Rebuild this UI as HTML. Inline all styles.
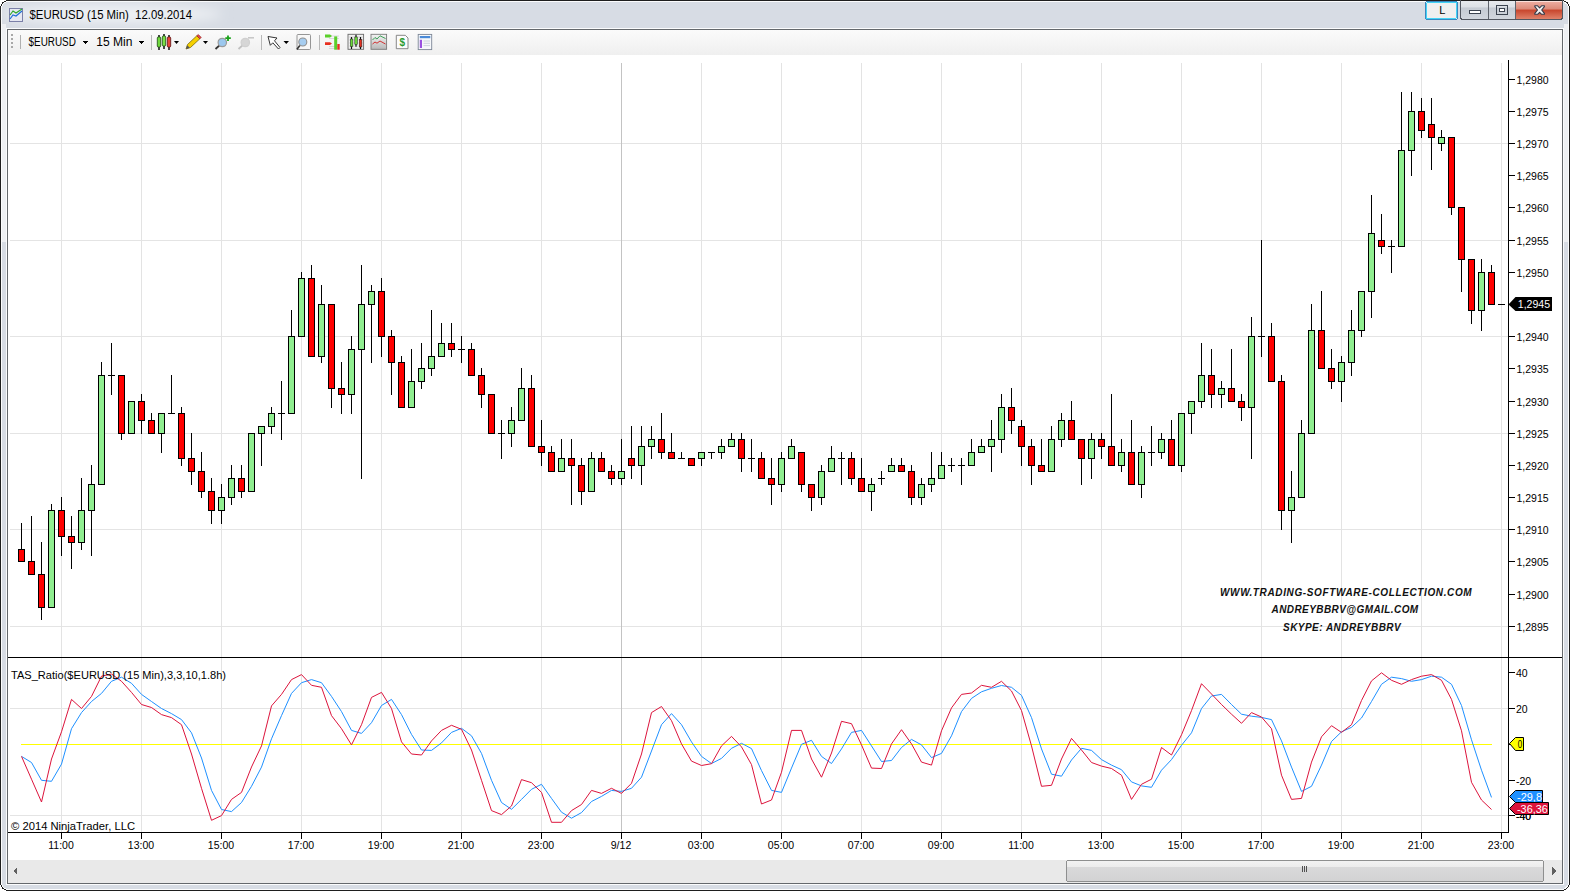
<!DOCTYPE html>
<html><head><meta charset="utf-8"><style>
html,body{margin:0;padding:0;width:1570px;height:891px;overflow:hidden;background:#fff;}
svg{position:absolute;left:0;top:0;}
text{font-family:"Liberation Sans",sans-serif;}
.ax{font-size:10.5px;fill:#000;}
.wm{font-size:10px;font-weight:bold;font-style:italic;fill:#111;letter-spacing:0.3px;}
</style></head><body>
<svg width="1570" height="891" viewBox="0 0 1570 891" shape-rendering="crispEdges">
<defs>
<linearGradient id="tb" x1="0" y1="0" x2="0" y2="1"><stop offset="0" stop-color="#fbfbfb"/><stop offset="1" stop-color="#efefef"/></linearGradient>
<linearGradient id="title" x1="0" y1="0" x2="0" y2="1"><stop offset="0" stop-color="#dde3ea"/><stop offset="1" stop-color="#e3e8ee"/></linearGradient>
<linearGradient id="closeg" x1="0" y1="0" x2="0" y2="1"><stop offset="0" stop-color="#eeb0a4"/><stop offset=".45" stop-color="#dc8a78"/><stop offset=".5" stop-color="#c8452c"/><stop offset="1" stop-color="#e0826a"/></linearGradient>
<linearGradient id="btng" x1="0" y1="0" x2="0" y2="1"><stop offset="0" stop-color="#eef0f3"/><stop offset=".45" stop-color="#dde1e6"/><stop offset=".5" stop-color="#c5cbd3"/><stop offset="1" stop-color="#d2d7de"/></linearGradient>
<linearGradient id="thumb" x1="0" y1="0" x2="0" y2="1"><stop offset="0" stop-color="#f3f3f3"/><stop offset=".3" stop-color="#ececec"/><stop offset=".31" stop-color="#d9d9da"/><stop offset="1" stop-color="#d2d2d3"/></linearGradient>
</defs>
<!-- window frame -->
<rect x="0.5" y="0.5" width="1569" height="890" rx="8" ry="8" fill="#d7dce4" stroke="#1e1e1e"/>
<rect x="1.5" y="1.5" width="1567" height="888" rx="7" ry="7" fill="none" stroke="#fbfcfd" stroke-width="1"/>
<rect x="2" y="24" width="4" height="218" fill="#eef0f3"/>
<rect x="1564" y="24" width="4" height="218" fill="#eef0f3"/>
<rect x="6.5" y="28.5" width="1557" height="856" fill="none" stroke="#fbfcfd"/>
<filter id="blur8" x="-20%" y="-100%" width="140%" height="300%"><feGaussianBlur stdDeviation="6"/></filter>
<ellipse cx="112" cy="14" rx="110" ry="9" fill="#eef1f4" filter="url(#blur8)"/>
<!-- title icon -->
<rect x="9.5" y="8.5" width="13" height="13" fill="#e6e8f2" stroke="#7b80a8"/>
<path d="M10,19 L13,15 L16,16 L22,11" fill="none" stroke="#1f6fd8" stroke-width="1.2" shape-rendering="geometricPrecision"/>
<path d="M10,15 L13,11 L16,13 L22,9" fill="none" stroke="#2da82d" stroke-width="1.2" shape-rendering="geometricPrecision"/>
<text x="29.5" y="19" style="font-size:12.5px" fill="#000" textLength="162.5" lengthAdjust="spacingAndGlyphs">$EURUSD (15 Min)&#160; 12.09.2014</text>
<!-- title buttons -->
<rect x="1425.5" y="1.5" width="32" height="18" rx="2" fill="#f0f0f0" stroke="#3a88c0" stroke-width="1"/>
<rect x="1426.5" y="2.5" width="30" height="16" rx="1.5" fill="none" stroke="#44d4f6" stroke-width="1"/>
<text x="1439.3" y="14" style="font-size:11px" fill="#000">L</text>
<rect x="1460.5" y="-3.5" width="102" height="23" rx="3" fill="url(#btng)" stroke="#525760"/>
<line x1="1461" y1="0.5" x2="1562" y2="0.5" stroke="#1e1e1e"/>
<rect x="1515" y="1" width="47" height="18" rx="2" fill="url(#closeg)"/>
<line x1="1488.5" y1="1" x2="1488.5" y2="19" stroke="#5e636b"/>
<line x1="1515.5" y1="1" x2="1515.5" y2="19" stroke="#5e636b"/>
<rect x="1469.5" y="10.5" width="11" height="3" fill="#fff" stroke="#3c4450"/>
<rect x="1496.5" y="5.5" width="11" height="9" fill="none" stroke="#3c4450" stroke-width="1.2"/>
<rect x="1499.5" y="8.5" width="5" height="3" fill="#fff" stroke="#3c4450"/>
<path d="M1534.8,5.8 L1537.6,5.8 L1539.6,7.8 L1541.6,5.8 L1544.4,5.8 L1544.4,6.6 L1541.7,10 L1544.4,13.4 L1544.4,14.3 L1541.6,14.3 L1539.6,12.3 L1537.6,14.3 L1534.8,14.3 L1534.8,13.4 L1537.5,10 L1534.8,6.6 Z" fill="#f2f2f2" stroke="#343a48" stroke-width="1.1" stroke-linejoin="round" shape-rendering="geometricPrecision"/>
<line x1="1516" y1="1.5" x2="1562" y2="1.5" stroke="#fbe0da"/>
<!-- client area -->
<rect x="7.5" y="29.5" width="1555" height="854" fill="#fff" stroke="#64686c"/>
<rect x="8" y="30" width="1554" height="25" fill="url(#tb)"/>
<!-- scrollbar -->
<rect x="8" y="860" width="1554" height="23" fill="#e9e9e9"/>
<rect x="1066.5" y="860.5" width="477" height="21" rx="2" fill="url(#thumb)" stroke="#8e8f8f"/>
<path d="M1302.5,866 v6 M1304.5,866 v6 M1306.5,866 v6" stroke="#505050"/>
<path d="M17,867 L13,871 L17,875 Z" fill="#606060"/>
<path d="M1552,867 L1556,871 L1552,875 Z" fill="#606060"/>
<!-- toolbar -->
<g id="toolbar">
<path d="M11,34 h2 v2 h-2 Z M11,38 h2 v2 h-2 Z M11,42 h2 v2 h-2 Z M11,46 h2 v2 h-2 Z" fill="#a8a8a8"/>
<line x1="20.5" y1="35" x2="20.5" y2="49" stroke="#b0b0b0"/>
<text x="28.5" y="45.5" style="font-size:12px" fill="#000" textLength="47.4" lengthAdjust="spacingAndGlyphs">$EURUSD</text>
<path d="M83,41 L88,41 L85.5,44 Z" fill="#000"/>
<text x="96.3" y="45.5" style="font-size:12px" fill="#000" textLength="36.2" lengthAdjust="spacingAndGlyphs">15 Min</text>
<path d="M139,41 L144,41 L141.5,44 Z" fill="#000"/>
<line x1="151.5" y1="35" x2="151.5" y2="50" stroke="#b8b8b8"/>
<g shape-rendering="geometricPrecision">
<!-- candles icon -->
<path d="M159,35 v15 M164,34 v15 M169,35 v15" stroke="#000" stroke-width="1.4"/>
<rect x="157.3" y="37" width="3.4" height="10" rx="1" fill="#6fd83c" stroke="#1c4a10" stroke-width=".8"/>
<rect x="162.3" y="36" width="3.4" height="10" rx="1" fill="#7be046" stroke="#1c4a10" stroke-width=".8"/>
<rect x="167.3" y="37" width="3.4" height="10" rx="1" fill="#e8453a" stroke="#5a1010" stroke-width=".8"/>
<path d="M174,41 L179,41 L176.5,44 Z" fill="#000"/>
<!-- pencil -->
<path d="M186,49 L187.5,44.5 L196.8,35.8 L199.8,38.8 L190.5,47.5 Z" fill="#f5d000" stroke="#7a6a10" stroke-width=".8"/>
<path d="M196.8,35.8 L198.3,34.5 L201.3,37.5 L199.8,38.8 Z" fill="#e84848" stroke="#8a2020" stroke-width=".6"/>
<path d="M186,49 L187.3,45.3 L189.7,47.7 Z" fill="#555"/>
<path d="M203,41 L208,41 L205.5,44 Z" fill="#000"/>
<!-- zoom in -->
<line x1="215.5" y1="49" x2="219.5" y2="45.3" stroke="#333" stroke-width="1.8"/>
<circle cx="222.3" cy="42.5" r="4.2" fill="#9cc8ee" stroke="#9a9a9a" stroke-width="1.2"/>
<path d="M228,35.5 v5.5 M225.3,38.2 h5.5" stroke="#1aa21a" stroke-width="1.8"/>
<!-- zoom out gray -->
<line x1="238.5" y1="49" x2="242.5" y2="45.3" stroke="#c0c0c0" stroke-width="1.8"/>
<circle cx="245.3" cy="42.5" r="4.2" fill="#d6d6d6" stroke="#d0d0d0" stroke-width="1.2"/>
<path d="M248,37.8 h6" stroke="#c8c8c8" stroke-width="1.6"/>
</g>
<line x1="261.5" y1="35" x2="261.5" y2="50" stroke="#b8b8b8"/>
<g shape-rendering="geometricPrecision">
<!-- cursor -->
<path d="M268,36.5 L277,38 L274.5,40.8 L280,47.5 L278.5,49 L272.8,42.8 L270.3,45.3 Z" fill="#fff" stroke="#333" stroke-width="1"/>
<path d="M283.5,41 L289,41 L286.25,44 Z" fill="#000"/>
<!-- magnifier box -->
<rect x="297" y="34.5" width="13.5" height="15" rx="1" fill="#f8f8f8" stroke="#8a8a8a" stroke-width=".9"/>
<circle cx="302.8" cy="42" r="4" fill="#a6cdf0" stroke="#909090" stroke-width="1.1"/>
<line x1="296.8" y1="49.5" x2="299.8" y2="45.5" stroke="#333" stroke-width="1.6"/>
</g>
<line x1="319.5" y1="35" x2="319.5" y2="50" stroke="#b8b8b8"/>
<g shape-rendering="geometricPrecision">
<!-- strategy icon -->
<path d="M329,36 h10 M329,38.5 h10 M329,46.5 h10 M329,48.5 h10" stroke="#d0d0d0" stroke-width=".8"/>
<path d="M325,34.6 h5 l2,1.5 l-2,1.5 h-5 Z" fill="#5ad02a"/>
<path d="M325,42.2 h5 l2,1.4 l-2,1.4 h-5 Z" fill="#e83020"/>
<rect x="334.2" y="36.4" width="3" height="13.3" fill="#5ad02a"/>
<rect x="337.3" y="44" width="2.4" height="5.7" fill="#e83020"/>
<!-- candle box -->
<rect x="348" y="34.3" width="15.6" height="15" fill="#f0f0f0" stroke="#6a6a6a" stroke-width=".9"/>
<path d="M349,37 h14 M349,40 h14 M349,43 h14 M349,46 h14" stroke="#c8c8c8" stroke-width=".6"/>
<path d="M351.5,37 v12 M356,34.8 v12 M360.5,37 v12" stroke="#111" stroke-width="1.2"/>
<rect x="350.3" y="39" width="2.6" height="7.5" fill="#6ad83a" stroke="#222" stroke-width=".5"/>
<rect x="354.8" y="37" width="2.6" height="7.5" fill="#6ad83a" stroke="#222" stroke-width=".5"/>
<rect x="359.3" y="39.5" width="2.6" height="7.5" fill="#e03020" stroke="#222" stroke-width=".5"/>
<!-- line chart box -->
<defs><linearGradient id="lcb" x1="0" y1="0" x2="0" y2="1"><stop offset="0" stop-color="#f4f4f4"/><stop offset="1" stop-color="#b8b8b8"/></linearGradient></defs>
<rect x="371" y="34.3" width="15.6" height="15" fill="url(#lcb)" stroke="#7a7a7a" stroke-width=".9"/>
<path d="M372.5,40 L375,37.5 L377,39 L380,35.8 L385.5,38.5" fill="none" stroke="#2a9a4a" stroke-width=".9"/>
<path d="M372.5,44 L375,42 L377,43.2 L380,41 L385.5,44" fill="none" stroke="#d02020" stroke-width=".9"/>
<!-- dollar page -->
<path d="M396.3,35.3 h9 l2.7,2.7 v10.7 h-11.7 Z" fill="#fcfcfc" stroke="#7a7a7a" stroke-width=".9"/>
<text x="402.2" y="46.3" style="font-size:10px;font-weight:bold" fill="#2a9a30" text-anchor="middle">$</text>
<!-- table page -->
<rect x="418.2" y="34.4" width="13.5" height="15.2" fill="#f6f8fb" stroke="#7c8696" stroke-width=".9"/>
<rect x="419.8" y="36" width="10.5" height="2.2" fill="#4a8ad8"/>
<rect x="419.8" y="39.8" width="2.2" height="8.2" fill="#9a52e0"/>
<path d="M423.5,41 h6.5 M423.5,43.3 h6.5 M423.5,45.6 h6.5" stroke="#c0c8d4" stroke-width=".8"/>
</g>
</g>
<!-- chart -->
<line x1="10" y1="626.5" x2="1508" y2="626.5" stroke="#e4e4e4"/>
<line x1="10" y1="529.5" x2="1508" y2="529.5" stroke="#e4e4e4"/>
<line x1="10" y1="433.5" x2="1508" y2="433.5" stroke="#e4e4e4"/>
<line x1="10" y1="336.5" x2="1508" y2="336.5" stroke="#e4e4e4"/>
<line x1="10" y1="240.5" x2="1508" y2="240.5" stroke="#e4e4e4"/>
<line x1="10" y1="143.5" x2="1508" y2="143.5" stroke="#e4e4e4"/>
<line x1="10" y1="708.5" x2="1508" y2="708.5" stroke="#e4e4e4"/>
<line x1="10" y1="815.5" x2="1508" y2="815.5" stroke="#e4e4e4"/>
<line x1="61.5" y1="63" x2="61.5" y2="832" stroke="#e3e3e3"/>
<line x1="141.5" y1="63" x2="141.5" y2="832" stroke="#e3e3e3"/>
<line x1="221.5" y1="63" x2="221.5" y2="832" stroke="#e3e3e3"/>
<line x1="301.5" y1="63" x2="301.5" y2="832" stroke="#e3e3e3"/>
<line x1="381.5" y1="63" x2="381.5" y2="832" stroke="#e3e3e3"/>
<line x1="461.5" y1="63" x2="461.5" y2="832" stroke="#e3e3e3"/>
<line x1="541.5" y1="63" x2="541.5" y2="832" stroke="#e3e3e3"/>
<line x1="621.5" y1="63" x2="621.5" y2="832" stroke="#c3c3c3"/>
<line x1="701.5" y1="63" x2="701.5" y2="832" stroke="#e3e3e3"/>
<line x1="781.5" y1="63" x2="781.5" y2="832" stroke="#e3e3e3"/>
<line x1="861.5" y1="63" x2="861.5" y2="832" stroke="#e3e3e3"/>
<line x1="941.5" y1="63" x2="941.5" y2="832" stroke="#e3e3e3"/>
<line x1="1021.5" y1="63" x2="1021.5" y2="832" stroke="#e3e3e3"/>
<line x1="1101.5" y1="63" x2="1101.5" y2="832" stroke="#e3e3e3"/>
<line x1="1181.5" y1="63" x2="1181.5" y2="832" stroke="#e3e3e3"/>
<line x1="1261.5" y1="63" x2="1261.5" y2="832" stroke="#e3e3e3"/>
<line x1="1341.5" y1="63" x2="1341.5" y2="832" stroke="#e3e3e3"/>
<line x1="1421.5" y1="63" x2="1421.5" y2="832" stroke="#e3e3e3"/>
<line x1="1501.5" y1="63" x2="1501.5" y2="832" stroke="#e3e3e3"/>
<line x1="21.5" y1="523" x2="21.5" y2="549" stroke="#000"/>
<rect x="18.5" y="549.5" width="6" height="12" fill="#ff0000" stroke="#000"/>
<line x1="31.5" y1="516" x2="31.5" y2="561" stroke="#000"/>
<rect x="28.5" y="561.5" width="6" height="13" fill="#ff0000" stroke="#000"/>
<line x1="41.5" y1="542" x2="41.5" y2="574" stroke="#000"/>
<line x1="41.5" y1="608" x2="41.5" y2="620" stroke="#000"/>
<rect x="38.5" y="574.5" width="6" height="33" fill="#ff0000" stroke="#000"/>
<line x1="51.5" y1="504" x2="51.5" y2="510" stroke="#000"/>
<rect x="48.5" y="510.5" width="6" height="97" fill="#90ee90" stroke="#000"/>
<line x1="61.5" y1="497" x2="61.5" y2="510" stroke="#000"/>
<line x1="61.5" y1="537" x2="61.5" y2="556" stroke="#000"/>
<rect x="58.5" y="510.5" width="6" height="26" fill="#ff0000" stroke="#000"/>
<line x1="71.5" y1="516" x2="71.5" y2="536" stroke="#000"/>
<line x1="71.5" y1="543" x2="71.5" y2="569" stroke="#000"/>
<rect x="68.5" y="536.5" width="6" height="6" fill="#ff0000" stroke="#000"/>
<line x1="81.5" y1="478" x2="81.5" y2="510" stroke="#000"/>
<line x1="81.5" y1="543" x2="81.5" y2="550" stroke="#000"/>
<rect x="78.5" y="510.5" width="6" height="32" fill="#90ee90" stroke="#000"/>
<line x1="91.5" y1="465" x2="91.5" y2="484" stroke="#000"/>
<line x1="91.5" y1="511" x2="91.5" y2="556" stroke="#000"/>
<rect x="88.5" y="484.5" width="6" height="26" fill="#90ee90" stroke="#000"/>
<line x1="101.5" y1="362" x2="101.5" y2="375" stroke="#000"/>
<rect x="98.5" y="375.5" width="6" height="109" fill="#90ee90" stroke="#000"/>
<line x1="111.5" y1="343" x2="111.5" y2="375" stroke="#000"/>
<line x1="111.5" y1="376" x2="111.5" y2="395" stroke="#000"/>
<line x1="108" y1="375.5" x2="115" y2="375.5" stroke="#000"/>
<line x1="121.5" y1="434" x2="121.5" y2="440" stroke="#000"/>
<rect x="118.5" y="375.5" width="6" height="58" fill="#ff0000" stroke="#000"/>
<rect x="128.5" y="401.5" width="6" height="32" fill="#90ee90" stroke="#000"/>
<line x1="141.5" y1="394" x2="141.5" y2="401" stroke="#000"/>
<line x1="141.5" y1="421" x2="141.5" y2="434" stroke="#000"/>
<rect x="138.5" y="401.5" width="6" height="19" fill="#ff0000" stroke="#000"/>
<line x1="151.5" y1="413" x2="151.5" y2="420" stroke="#000"/>
<rect x="148.5" y="420.5" width="6" height="13" fill="#ff0000" stroke="#000"/>
<line x1="161.5" y1="434" x2="161.5" y2="453" stroke="#000"/>
<rect x="158.5" y="413.5" width="6" height="20" fill="#90ee90" stroke="#000"/>
<line x1="171.5" y1="375" x2="171.5" y2="413" stroke="#000"/>
<line x1="168" y1="413.5" x2="175" y2="413.5" stroke="#000"/>
<line x1="181.5" y1="407" x2="181.5" y2="413" stroke="#000"/>
<line x1="181.5" y1="459" x2="181.5" y2="466" stroke="#000"/>
<rect x="178.5" y="413.5" width="6" height="45" fill="#ff0000" stroke="#000"/>
<line x1="191.5" y1="433" x2="191.5" y2="458" stroke="#000"/>
<line x1="191.5" y1="472" x2="191.5" y2="485" stroke="#000"/>
<rect x="188.5" y="458.5" width="6" height="13" fill="#ff0000" stroke="#000"/>
<line x1="201.5" y1="452" x2="201.5" y2="471" stroke="#000"/>
<line x1="201.5" y1="492" x2="201.5" y2="498" stroke="#000"/>
<rect x="198.5" y="471.5" width="6" height="20" fill="#ff0000" stroke="#000"/>
<line x1="211.5" y1="478" x2="211.5" y2="491" stroke="#000"/>
<line x1="211.5" y1="511" x2="211.5" y2="524" stroke="#000"/>
<rect x="208.5" y="491.5" width="6" height="19" fill="#ff0000" stroke="#000"/>
<line x1="221.5" y1="484" x2="221.5" y2="497" stroke="#000"/>
<line x1="221.5" y1="511" x2="221.5" y2="524" stroke="#000"/>
<rect x="218.5" y="497.5" width="6" height="13" fill="#90ee90" stroke="#000"/>
<line x1="231.5" y1="465" x2="231.5" y2="478" stroke="#000"/>
<line x1="231.5" y1="498" x2="231.5" y2="505" stroke="#000"/>
<rect x="228.5" y="478.5" width="6" height="19" fill="#90ee90" stroke="#000"/>
<line x1="241.5" y1="465" x2="241.5" y2="478" stroke="#000"/>
<line x1="241.5" y1="492" x2="241.5" y2="498" stroke="#000"/>
<rect x="238.5" y="478.5" width="6" height="13" fill="#ff0000" stroke="#000"/>
<rect x="248.5" y="433.5" width="6" height="58" fill="#90ee90" stroke="#000"/>
<line x1="261.5" y1="434" x2="261.5" y2="466" stroke="#000"/>
<rect x="258.5" y="426.5" width="6" height="7" fill="#90ee90" stroke="#000"/>
<line x1="271.5" y1="407" x2="271.5" y2="413" stroke="#000"/>
<line x1="271.5" y1="427" x2="271.5" y2="434" stroke="#000"/>
<rect x="268.5" y="413.5" width="6" height="13" fill="#90ee90" stroke="#000"/>
<line x1="281.5" y1="381" x2="281.5" y2="413" stroke="#000"/>
<line x1="281.5" y1="414" x2="281.5" y2="440" stroke="#000"/>
<line x1="278" y1="413.5" x2="285" y2="413.5" stroke="#000"/>
<line x1="291.5" y1="310" x2="291.5" y2="336" stroke="#000"/>
<rect x="288.5" y="336.5" width="6" height="77" fill="#90ee90" stroke="#000"/>
<line x1="301.5" y1="272" x2="301.5" y2="278" stroke="#000"/>
<rect x="298.5" y="278.5" width="6" height="58" fill="#90ee90" stroke="#000"/>
<line x1="311.5" y1="265" x2="311.5" y2="278" stroke="#000"/>
<rect x="308.5" y="278.5" width="6" height="78" fill="#ff0000" stroke="#000"/>
<line x1="321.5" y1="285" x2="321.5" y2="304" stroke="#000"/>
<line x1="321.5" y1="357" x2="321.5" y2="363" stroke="#000"/>
<rect x="318.5" y="304.5" width="6" height="52" fill="#90ee90" stroke="#000"/>
<line x1="331.5" y1="389" x2="331.5" y2="408" stroke="#000"/>
<rect x="328.5" y="304.5" width="6" height="84" fill="#ff0000" stroke="#000"/>
<line x1="341.5" y1="362" x2="341.5" y2="388" stroke="#000"/>
<line x1="341.5" y1="395" x2="341.5" y2="414" stroke="#000"/>
<rect x="338.5" y="388.5" width="6" height="6" fill="#ff0000" stroke="#000"/>
<line x1="351.5" y1="336" x2="351.5" y2="349" stroke="#000"/>
<line x1="351.5" y1="395" x2="351.5" y2="414" stroke="#000"/>
<rect x="348.5" y="349.5" width="6" height="45" fill="#90ee90" stroke="#000"/>
<line x1="361.5" y1="265" x2="361.5" y2="304" stroke="#000"/>
<line x1="361.5" y1="350" x2="361.5" y2="479" stroke="#000"/>
<rect x="358.5" y="304.5" width="6" height="45" fill="#90ee90" stroke="#000"/>
<line x1="371.5" y1="285" x2="371.5" y2="291" stroke="#000"/>
<line x1="371.5" y1="305" x2="371.5" y2="363" stroke="#000"/>
<rect x="368.5" y="291.5" width="6" height="13" fill="#90ee90" stroke="#000"/>
<line x1="381.5" y1="278" x2="381.5" y2="291" stroke="#000"/>
<line x1="381.5" y1="337" x2="381.5" y2="357" stroke="#000"/>
<rect x="378.5" y="291.5" width="6" height="45" fill="#ff0000" stroke="#000"/>
<line x1="391.5" y1="330" x2="391.5" y2="336" stroke="#000"/>
<line x1="391.5" y1="363" x2="391.5" y2="395" stroke="#000"/>
<rect x="388.5" y="336.5" width="6" height="26" fill="#ff0000" stroke="#000"/>
<line x1="401.5" y1="356" x2="401.5" y2="362" stroke="#000"/>
<rect x="398.5" y="362.5" width="6" height="45" fill="#ff0000" stroke="#000"/>
<line x1="411.5" y1="349" x2="411.5" y2="381" stroke="#000"/>
<rect x="408.5" y="381.5" width="6" height="26" fill="#90ee90" stroke="#000"/>
<line x1="421.5" y1="343" x2="421.5" y2="368" stroke="#000"/>
<line x1="421.5" y1="382" x2="421.5" y2="389" stroke="#000"/>
<rect x="418.5" y="368.5" width="6" height="13" fill="#90ee90" stroke="#000"/>
<line x1="431.5" y1="310" x2="431.5" y2="356" stroke="#000"/>
<line x1="431.5" y1="369" x2="431.5" y2="376" stroke="#000"/>
<rect x="428.5" y="356.5" width="6" height="12" fill="#90ee90" stroke="#000"/>
<line x1="441.5" y1="323" x2="441.5" y2="343" stroke="#000"/>
<rect x="438.5" y="343.5" width="6" height="13" fill="#90ee90" stroke="#000"/>
<line x1="451.5" y1="323" x2="451.5" y2="343" stroke="#000"/>
<line x1="451.5" y1="350" x2="451.5" y2="357" stroke="#000"/>
<rect x="448.5" y="343.5" width="6" height="6" fill="#ff0000" stroke="#000"/>
<line x1="461.5" y1="336" x2="461.5" y2="349" stroke="#000"/>
<line x1="461.5" y1="350" x2="461.5" y2="363" stroke="#000"/>
<line x1="458" y1="349.5" x2="465" y2="349.5" stroke="#000"/>
<line x1="471.5" y1="343" x2="471.5" y2="349" stroke="#000"/>
<rect x="468.5" y="349.5" width="6" height="26" fill="#ff0000" stroke="#000"/>
<line x1="481.5" y1="368" x2="481.5" y2="375" stroke="#000"/>
<line x1="481.5" y1="395" x2="481.5" y2="408" stroke="#000"/>
<rect x="478.5" y="375.5" width="6" height="19" fill="#ff0000" stroke="#000"/>
<rect x="488.5" y="394.5" width="6" height="39" fill="#ff0000" stroke="#000"/>
<line x1="501.5" y1="420" x2="501.5" y2="433" stroke="#000"/>
<line x1="501.5" y1="434" x2="501.5" y2="459" stroke="#000"/>
<line x1="498" y1="433.5" x2="505" y2="433.5" stroke="#000"/>
<line x1="511.5" y1="407" x2="511.5" y2="420" stroke="#000"/>
<line x1="511.5" y1="434" x2="511.5" y2="447" stroke="#000"/>
<rect x="508.5" y="420.5" width="6" height="13" fill="#90ee90" stroke="#000"/>
<line x1="521.5" y1="368" x2="521.5" y2="388" stroke="#000"/>
<rect x="518.5" y="388.5" width="6" height="32" fill="#90ee90" stroke="#000"/>
<line x1="531.5" y1="375" x2="531.5" y2="388" stroke="#000"/>
<rect x="528.5" y="388.5" width="6" height="58" fill="#ff0000" stroke="#000"/>
<line x1="541.5" y1="420" x2="541.5" y2="446" stroke="#000"/>
<line x1="541.5" y1="453" x2="541.5" y2="466" stroke="#000"/>
<rect x="538.5" y="446.5" width="6" height="6" fill="#ff0000" stroke="#000"/>
<line x1="551.5" y1="446" x2="551.5" y2="452" stroke="#000"/>
<rect x="548.5" y="452.5" width="6" height="19" fill="#ff0000" stroke="#000"/>
<line x1="561.5" y1="439" x2="561.5" y2="458" stroke="#000"/>
<rect x="558.5" y="458.5" width="6" height="13" fill="#90ee90" stroke="#000"/>
<line x1="571.5" y1="439" x2="571.5" y2="458" stroke="#000"/>
<line x1="571.5" y1="466" x2="571.5" y2="505" stroke="#000"/>
<rect x="568.5" y="458.5" width="6" height="7" fill="#ff0000" stroke="#000"/>
<line x1="581.5" y1="458" x2="581.5" y2="465" stroke="#000"/>
<line x1="581.5" y1="492" x2="581.5" y2="505" stroke="#000"/>
<rect x="578.5" y="465.5" width="6" height="26" fill="#ff0000" stroke="#000"/>
<line x1="591.5" y1="452" x2="591.5" y2="458" stroke="#000"/>
<rect x="588.5" y="458.5" width="6" height="33" fill="#90ee90" stroke="#000"/>
<line x1="601.5" y1="452" x2="601.5" y2="458" stroke="#000"/>
<rect x="598.5" y="458.5" width="6" height="13" fill="#ff0000" stroke="#000"/>
<line x1="611.5" y1="465" x2="611.5" y2="471" stroke="#000"/>
<line x1="611.5" y1="479" x2="611.5" y2="485" stroke="#000"/>
<rect x="608.5" y="471.5" width="6" height="7" fill="#ff0000" stroke="#000"/>
<line x1="621.5" y1="439" x2="621.5" y2="471" stroke="#000"/>
<line x1="621.5" y1="479" x2="621.5" y2="485" stroke="#000"/>
<rect x="618.5" y="471.5" width="6" height="7" fill="#90ee90" stroke="#000"/>
<line x1="631.5" y1="426" x2="631.5" y2="458" stroke="#000"/>
<line x1="631.5" y1="466" x2="631.5" y2="479" stroke="#000"/>
<rect x="628.5" y="458.5" width="6" height="7" fill="#ff0000" stroke="#000"/>
<line x1="641.5" y1="426" x2="641.5" y2="446" stroke="#000"/>
<line x1="641.5" y1="466" x2="641.5" y2="485" stroke="#000"/>
<rect x="638.5" y="446.5" width="6" height="19" fill="#90ee90" stroke="#000"/>
<line x1="651.5" y1="426" x2="651.5" y2="439" stroke="#000"/>
<line x1="651.5" y1="447" x2="651.5" y2="459" stroke="#000"/>
<rect x="648.5" y="439.5" width="6" height="7" fill="#90ee90" stroke="#000"/>
<line x1="661.5" y1="413" x2="661.5" y2="439" stroke="#000"/>
<line x1="661.5" y1="453" x2="661.5" y2="459" stroke="#000"/>
<rect x="658.5" y="439.5" width="6" height="13" fill="#ff0000" stroke="#000"/>
<line x1="671.5" y1="433" x2="671.5" y2="452" stroke="#000"/>
<rect x="668.5" y="452.5" width="6" height="6" fill="#ff0000" stroke="#000"/>
<line x1="681.5" y1="452" x2="681.5" y2="458" stroke="#000"/>
<line x1="678" y1="458.5" x2="685" y2="458.5" stroke="#000"/>
<rect x="688.5" y="458.5" width="6" height="7" fill="#ff0000" stroke="#000"/>
<line x1="701.5" y1="459" x2="701.5" y2="466" stroke="#000"/>
<rect x="698.5" y="452.5" width="6" height="6" fill="#90ee90" stroke="#000"/>
<line x1="711.5" y1="453" x2="711.5" y2="459" stroke="#000"/>
<line x1="708" y1="452.5" x2="715" y2="452.5" stroke="#000"/>
<line x1="721.5" y1="439" x2="721.5" y2="446" stroke="#000"/>
<line x1="721.5" y1="453" x2="721.5" y2="459" stroke="#000"/>
<rect x="718.5" y="446.5" width="6" height="6" fill="#90ee90" stroke="#000"/>
<line x1="731.5" y1="433" x2="731.5" y2="439" stroke="#000"/>
<rect x="728.5" y="439.5" width="6" height="7" fill="#90ee90" stroke="#000"/>
<line x1="741.5" y1="433" x2="741.5" y2="439" stroke="#000"/>
<line x1="741.5" y1="459" x2="741.5" y2="472" stroke="#000"/>
<rect x="738.5" y="439.5" width="6" height="19" fill="#ff0000" stroke="#000"/>
<line x1="751.5" y1="439" x2="751.5" y2="458" stroke="#000"/>
<line x1="751.5" y1="459" x2="751.5" y2="472" stroke="#000"/>
<line x1="748" y1="458.5" x2="755" y2="458.5" stroke="#000"/>
<line x1="761.5" y1="452" x2="761.5" y2="458" stroke="#000"/>
<rect x="758.5" y="458.5" width="6" height="20" fill="#ff0000" stroke="#000"/>
<line x1="771.5" y1="458" x2="771.5" y2="478" stroke="#000"/>
<line x1="771.5" y1="485" x2="771.5" y2="505" stroke="#000"/>
<rect x="768.5" y="478.5" width="6" height="6" fill="#ff0000" stroke="#000"/>
<line x1="781.5" y1="452" x2="781.5" y2="458" stroke="#000"/>
<line x1="781.5" y1="485" x2="781.5" y2="492" stroke="#000"/>
<rect x="778.5" y="458.5" width="6" height="26" fill="#90ee90" stroke="#000"/>
<line x1="791.5" y1="439" x2="791.5" y2="446" stroke="#000"/>
<rect x="788.5" y="446.5" width="6" height="12" fill="#90ee90" stroke="#000"/>
<line x1="801.5" y1="485" x2="801.5" y2="492" stroke="#000"/>
<rect x="798.5" y="452.5" width="6" height="32" fill="#ff0000" stroke="#000"/>
<line x1="811.5" y1="498" x2="811.5" y2="511" stroke="#000"/>
<rect x="808.5" y="484.5" width="6" height="13" fill="#ff0000" stroke="#000"/>
<line x1="821.5" y1="465" x2="821.5" y2="471" stroke="#000"/>
<line x1="821.5" y1="498" x2="821.5" y2="505" stroke="#000"/>
<rect x="818.5" y="471.5" width="6" height="26" fill="#90ee90" stroke="#000"/>
<line x1="831.5" y1="446" x2="831.5" y2="458" stroke="#000"/>
<rect x="828.5" y="458.5" width="6" height="13" fill="#90ee90" stroke="#000"/>
<line x1="841.5" y1="452" x2="841.5" y2="458" stroke="#000"/>
<line x1="841.5" y1="459" x2="841.5" y2="485" stroke="#000"/>
<line x1="838" y1="458.5" x2="845" y2="458.5" stroke="#000"/>
<line x1="851.5" y1="452" x2="851.5" y2="458" stroke="#000"/>
<line x1="851.5" y1="479" x2="851.5" y2="485" stroke="#000"/>
<rect x="848.5" y="458.5" width="6" height="20" fill="#ff0000" stroke="#000"/>
<line x1="861.5" y1="458" x2="861.5" y2="478" stroke="#000"/>
<rect x="858.5" y="478.5" width="6" height="13" fill="#ff0000" stroke="#000"/>
<line x1="871.5" y1="478" x2="871.5" y2="484" stroke="#000"/>
<line x1="871.5" y1="492" x2="871.5" y2="511" stroke="#000"/>
<rect x="868.5" y="484.5" width="6" height="7" fill="#90ee90" stroke="#000"/>
<line x1="881.5" y1="471" x2="881.5" y2="478" stroke="#000"/>
<line x1="881.5" y1="479" x2="881.5" y2="485" stroke="#000"/>
<line x1="878" y1="478.5" x2="885" y2="478.5" stroke="#000"/>
<line x1="891.5" y1="458" x2="891.5" y2="465" stroke="#000"/>
<rect x="888.5" y="465.5" width="6" height="6" fill="#90ee90" stroke="#000"/>
<line x1="901.5" y1="458" x2="901.5" y2="465" stroke="#000"/>
<rect x="898.5" y="465.5" width="6" height="6" fill="#ff0000" stroke="#000"/>
<line x1="911.5" y1="465" x2="911.5" y2="471" stroke="#000"/>
<line x1="911.5" y1="498" x2="911.5" y2="505" stroke="#000"/>
<rect x="908.5" y="471.5" width="6" height="26" fill="#ff0000" stroke="#000"/>
<line x1="921.5" y1="478" x2="921.5" y2="484" stroke="#000"/>
<line x1="921.5" y1="498" x2="921.5" y2="505" stroke="#000"/>
<rect x="918.5" y="484.5" width="6" height="13" fill="#90ee90" stroke="#000"/>
<line x1="931.5" y1="452" x2="931.5" y2="478" stroke="#000"/>
<line x1="931.5" y1="485" x2="931.5" y2="492" stroke="#000"/>
<rect x="928.5" y="478.5" width="6" height="6" fill="#90ee90" stroke="#000"/>
<line x1="941.5" y1="452" x2="941.5" y2="465" stroke="#000"/>
<rect x="938.5" y="465.5" width="6" height="13" fill="#90ee90" stroke="#000"/>
<line x1="951.5" y1="458" x2="951.5" y2="465" stroke="#000"/>
<line x1="951.5" y1="466" x2="951.5" y2="472" stroke="#000"/>
<line x1="948" y1="465.5" x2="955" y2="465.5" stroke="#000"/>
<line x1="961.5" y1="458" x2="961.5" y2="465" stroke="#000"/>
<line x1="961.5" y1="466" x2="961.5" y2="485" stroke="#000"/>
<line x1="958" y1="465.5" x2="965" y2="465.5" stroke="#000"/>
<line x1="971.5" y1="439" x2="971.5" y2="452" stroke="#000"/>
<rect x="968.5" y="452.5" width="6" height="13" fill="#90ee90" stroke="#000"/>
<line x1="981.5" y1="439" x2="981.5" y2="446" stroke="#000"/>
<rect x="978.5" y="446.5" width="6" height="6" fill="#90ee90" stroke="#000"/>
<line x1="991.5" y1="420" x2="991.5" y2="439" stroke="#000"/>
<line x1="991.5" y1="447" x2="991.5" y2="472" stroke="#000"/>
<rect x="988.5" y="439.5" width="6" height="7" fill="#90ee90" stroke="#000"/>
<line x1="1001.5" y1="394" x2="1001.5" y2="407" stroke="#000"/>
<line x1="1001.5" y1="440" x2="1001.5" y2="453" stroke="#000"/>
<rect x="998.5" y="407.5" width="6" height="32" fill="#90ee90" stroke="#000"/>
<line x1="1011.5" y1="388" x2="1011.5" y2="407" stroke="#000"/>
<line x1="1011.5" y1="421" x2="1011.5" y2="434" stroke="#000"/>
<rect x="1008.5" y="407.5" width="6" height="13" fill="#ff0000" stroke="#000"/>
<line x1="1021.5" y1="420" x2="1021.5" y2="426" stroke="#000"/>
<line x1="1021.5" y1="447" x2="1021.5" y2="466" stroke="#000"/>
<rect x="1018.5" y="426.5" width="6" height="20" fill="#ff0000" stroke="#000"/>
<line x1="1031.5" y1="439" x2="1031.5" y2="446" stroke="#000"/>
<line x1="1031.5" y1="466" x2="1031.5" y2="485" stroke="#000"/>
<rect x="1028.5" y="446.5" width="6" height="19" fill="#ff0000" stroke="#000"/>
<line x1="1041.5" y1="439" x2="1041.5" y2="465" stroke="#000"/>
<rect x="1038.5" y="465.5" width="6" height="6" fill="#ff0000" stroke="#000"/>
<line x1="1051.5" y1="426" x2="1051.5" y2="439" stroke="#000"/>
<rect x="1048.5" y="439.5" width="6" height="32" fill="#90ee90" stroke="#000"/>
<line x1="1061.5" y1="413" x2="1061.5" y2="420" stroke="#000"/>
<line x1="1061.5" y1="440" x2="1061.5" y2="447" stroke="#000"/>
<rect x="1058.5" y="420.5" width="6" height="19" fill="#90ee90" stroke="#000"/>
<line x1="1071.5" y1="401" x2="1071.5" y2="420" stroke="#000"/>
<rect x="1068.5" y="420.5" width="6" height="19" fill="#ff0000" stroke="#000"/>
<line x1="1081.5" y1="459" x2="1081.5" y2="485" stroke="#000"/>
<rect x="1078.5" y="439.5" width="6" height="19" fill="#ff0000" stroke="#000"/>
<line x1="1091.5" y1="433" x2="1091.5" y2="439" stroke="#000"/>
<line x1="1091.5" y1="459" x2="1091.5" y2="479" stroke="#000"/>
<rect x="1088.5" y="439.5" width="6" height="19" fill="#90ee90" stroke="#000"/>
<line x1="1101.5" y1="433" x2="1101.5" y2="439" stroke="#000"/>
<line x1="1101.5" y1="447" x2="1101.5" y2="459" stroke="#000"/>
<rect x="1098.5" y="439.5" width="6" height="7" fill="#ff0000" stroke="#000"/>
<line x1="1111.5" y1="394" x2="1111.5" y2="446" stroke="#000"/>
<rect x="1108.5" y="446.5" width="6" height="19" fill="#ff0000" stroke="#000"/>
<line x1="1121.5" y1="439" x2="1121.5" y2="452" stroke="#000"/>
<line x1="1121.5" y1="466" x2="1121.5" y2="472" stroke="#000"/>
<rect x="1118.5" y="452.5" width="6" height="13" fill="#90ee90" stroke="#000"/>
<line x1="1131.5" y1="420" x2="1131.5" y2="452" stroke="#000"/>
<rect x="1128.5" y="452.5" width="6" height="32" fill="#ff0000" stroke="#000"/>
<line x1="1141.5" y1="446" x2="1141.5" y2="452" stroke="#000"/>
<line x1="1141.5" y1="485" x2="1141.5" y2="498" stroke="#000"/>
<rect x="1138.5" y="452.5" width="6" height="32" fill="#90ee90" stroke="#000"/>
<line x1="1151.5" y1="426" x2="1151.5" y2="452" stroke="#000"/>
<line x1="1151.5" y1="453" x2="1151.5" y2="466" stroke="#000"/>
<line x1="1148" y1="452.5" x2="1155" y2="452.5" stroke="#000"/>
<line x1="1161.5" y1="433" x2="1161.5" y2="439" stroke="#000"/>
<line x1="1161.5" y1="453" x2="1161.5" y2="459" stroke="#000"/>
<rect x="1158.5" y="439.5" width="6" height="13" fill="#90ee90" stroke="#000"/>
<line x1="1171.5" y1="420" x2="1171.5" y2="439" stroke="#000"/>
<rect x="1168.5" y="439.5" width="6" height="26" fill="#ff0000" stroke="#000"/>
<line x1="1181.5" y1="466" x2="1181.5" y2="472" stroke="#000"/>
<rect x="1178.5" y="413.5" width="6" height="52" fill="#90ee90" stroke="#000"/>
<line x1="1191.5" y1="414" x2="1191.5" y2="434" stroke="#000"/>
<rect x="1188.5" y="401.5" width="6" height="12" fill="#90ee90" stroke="#000"/>
<line x1="1201.5" y1="343" x2="1201.5" y2="375" stroke="#000"/>
<line x1="1201.5" y1="402" x2="1201.5" y2="408" stroke="#000"/>
<rect x="1198.5" y="375.5" width="6" height="26" fill="#90ee90" stroke="#000"/>
<line x1="1211.5" y1="349" x2="1211.5" y2="375" stroke="#000"/>
<line x1="1211.5" y1="395" x2="1211.5" y2="408" stroke="#000"/>
<rect x="1208.5" y="375.5" width="6" height="19" fill="#ff0000" stroke="#000"/>
<line x1="1221.5" y1="381" x2="1221.5" y2="388" stroke="#000"/>
<line x1="1221.5" y1="395" x2="1221.5" y2="408" stroke="#000"/>
<rect x="1218.5" y="388.5" width="6" height="6" fill="#90ee90" stroke="#000"/>
<line x1="1231.5" y1="349" x2="1231.5" y2="388" stroke="#000"/>
<rect x="1228.5" y="388.5" width="6" height="13" fill="#ff0000" stroke="#000"/>
<line x1="1241.5" y1="394" x2="1241.5" y2="401" stroke="#000"/>
<line x1="1241.5" y1="408" x2="1241.5" y2="421" stroke="#000"/>
<rect x="1238.5" y="401.5" width="6" height="6" fill="#ff0000" stroke="#000"/>
<line x1="1251.5" y1="317" x2="1251.5" y2="336" stroke="#000"/>
<line x1="1251.5" y1="408" x2="1251.5" y2="459" stroke="#000"/>
<rect x="1248.5" y="336.5" width="6" height="71" fill="#90ee90" stroke="#000"/>
<line x1="1261.5" y1="240" x2="1261.5" y2="336" stroke="#000"/>
<line x1="1261.5" y1="337" x2="1261.5" y2="357" stroke="#000"/>
<line x1="1258" y1="336.5" x2="1265" y2="336.5" stroke="#000"/>
<line x1="1271.5" y1="323" x2="1271.5" y2="336" stroke="#000"/>
<rect x="1268.5" y="336.5" width="6" height="45" fill="#ff0000" stroke="#000"/>
<line x1="1281.5" y1="375" x2="1281.5" y2="381" stroke="#000"/>
<line x1="1281.5" y1="511" x2="1281.5" y2="530" stroke="#000"/>
<rect x="1278.5" y="381.5" width="6" height="129" fill="#ff0000" stroke="#000"/>
<line x1="1291.5" y1="471" x2="1291.5" y2="497" stroke="#000"/>
<line x1="1291.5" y1="511" x2="1291.5" y2="543" stroke="#000"/>
<rect x="1288.5" y="497.5" width="6" height="13" fill="#90ee90" stroke="#000"/>
<line x1="1301.5" y1="420" x2="1301.5" y2="433" stroke="#000"/>
<rect x="1298.5" y="433.5" width="6" height="64" fill="#90ee90" stroke="#000"/>
<line x1="1311.5" y1="304" x2="1311.5" y2="330" stroke="#000"/>
<rect x="1308.5" y="330.5" width="6" height="103" fill="#90ee90" stroke="#000"/>
<line x1="1321.5" y1="291" x2="1321.5" y2="330" stroke="#000"/>
<rect x="1318.5" y="330.5" width="6" height="38" fill="#ff0000" stroke="#000"/>
<line x1="1331.5" y1="349" x2="1331.5" y2="368" stroke="#000"/>
<line x1="1331.5" y1="382" x2="1331.5" y2="389" stroke="#000"/>
<rect x="1328.5" y="368.5" width="6" height="13" fill="#ff0000" stroke="#000"/>
<line x1="1341.5" y1="356" x2="1341.5" y2="362" stroke="#000"/>
<line x1="1341.5" y1="382" x2="1341.5" y2="402" stroke="#000"/>
<rect x="1338.5" y="362.5" width="6" height="19" fill="#90ee90" stroke="#000"/>
<line x1="1351.5" y1="310" x2="1351.5" y2="330" stroke="#000"/>
<line x1="1351.5" y1="363" x2="1351.5" y2="376" stroke="#000"/>
<rect x="1348.5" y="330.5" width="6" height="32" fill="#90ee90" stroke="#000"/>
<line x1="1361.5" y1="331" x2="1361.5" y2="337" stroke="#000"/>
<rect x="1358.5" y="291.5" width="6" height="39" fill="#90ee90" stroke="#000"/>
<line x1="1371.5" y1="195" x2="1371.5" y2="233" stroke="#000"/>
<line x1="1371.5" y1="292" x2="1371.5" y2="318" stroke="#000"/>
<rect x="1368.5" y="233.5" width="6" height="58" fill="#90ee90" stroke="#000"/>
<line x1="1381.5" y1="214" x2="1381.5" y2="240" stroke="#000"/>
<line x1="1381.5" y1="247" x2="1381.5" y2="254" stroke="#000"/>
<rect x="1378.5" y="240.5" width="6" height="6" fill="#ff0000" stroke="#000"/>
<line x1="1391.5" y1="240" x2="1391.5" y2="246" stroke="#000"/>
<line x1="1391.5" y1="247" x2="1391.5" y2="273" stroke="#000"/>
<line x1="1388" y1="246.5" x2="1395" y2="246.5" stroke="#000"/>
<line x1="1401.5" y1="92" x2="1401.5" y2="150" stroke="#000"/>
<rect x="1398.5" y="150.5" width="6" height="96" fill="#90ee90" stroke="#000"/>
<line x1="1411.5" y1="92" x2="1411.5" y2="111" stroke="#000"/>
<line x1="1411.5" y1="151" x2="1411.5" y2="176" stroke="#000"/>
<rect x="1408.5" y="111.5" width="6" height="39" fill="#90ee90" stroke="#000"/>
<line x1="1421.5" y1="98" x2="1421.5" y2="111" stroke="#000"/>
<line x1="1421.5" y1="131" x2="1421.5" y2="138" stroke="#000"/>
<rect x="1418.5" y="111.5" width="6" height="19" fill="#ff0000" stroke="#000"/>
<line x1="1431.5" y1="98" x2="1431.5" y2="124" stroke="#000"/>
<line x1="1431.5" y1="138" x2="1431.5" y2="170" stroke="#000"/>
<rect x="1428.5" y="124.5" width="6" height="13" fill="#ff0000" stroke="#000"/>
<line x1="1441.5" y1="130" x2="1441.5" y2="137" stroke="#000"/>
<line x1="1441.5" y1="144" x2="1441.5" y2="151" stroke="#000"/>
<rect x="1438.5" y="137.5" width="6" height="6" fill="#90ee90" stroke="#000"/>
<line x1="1451.5" y1="208" x2="1451.5" y2="215" stroke="#000"/>
<rect x="1448.5" y="137.5" width="6" height="70" fill="#ff0000" stroke="#000"/>
<line x1="1461.5" y1="260" x2="1461.5" y2="292" stroke="#000"/>
<rect x="1458.5" y="207.5" width="6" height="52" fill="#ff0000" stroke="#000"/>
<line x1="1471.5" y1="311" x2="1471.5" y2="324" stroke="#000"/>
<rect x="1468.5" y="259.5" width="6" height="51" fill="#ff0000" stroke="#000"/>
<line x1="1481.5" y1="259" x2="1481.5" y2="272" stroke="#000"/>
<line x1="1481.5" y1="311" x2="1481.5" y2="331" stroke="#000"/>
<rect x="1478.5" y="272.5" width="6" height="38" fill="#90ee90" stroke="#000"/>
<line x1="1491.5" y1="265" x2="1491.5" y2="272" stroke="#000"/>
<rect x="1488.5" y="272.5" width="6" height="32" fill="#ff0000" stroke="#000"/>
<line x1="21" y1="744.5" x2="1492" y2="744.5" stroke="#ffff00"/>
<polyline points="21.5,756.4 31.5,762.5 41.5,780.3 51.5,781.3 61.5,764.1 71.5,728.7 81.5,712.6 91.5,701.5 101.5,693.4 111.5,681.3 121.5,677.2 131.5,683.3 141.5,694.4 151.5,701.5 161.5,708.5 171.5,713.6 181.5,719.6 191.5,732.8 201.5,758.0 211.5,790.4 221.5,809.5 231.5,811.6 241.5,802.5 251.5,786.3 261.5,767.1 271.5,738.8 281.5,715.6 291.5,693.4 301.5,682.7 311.5,679.6 321.5,682.7 331.5,696.4 341.5,711.6 351.5,730.4 361.5,733.4 371.5,722.7 381.5,705.5 391.5,699.4 401.5,714.6 411.5,734.4 421.5,750.0 431.5,750.4 441.5,742.9 451.5,732.4 461.5,728.3 471.5,735.8 481.5,753.4 491.5,780.3 501.5,802.5 511.5,809.3 521.5,799.4 531.5,789.3 541.5,784.3 551.5,798.4 561.5,812.2 571.5,818.2 581.5,812.6 591.5,801.5 601.5,796.4 611.5,790.4 621.5,791.4 631.5,788.3 641.5,777.2 651.5,751.0 661.5,724.7 671.5,713.6 681.5,724.7 691.5,741.9 701.5,756.4 711.5,763.5 721.5,758.4 731.5,748.3 741.5,743.3 751.5,748.6 761.5,770.6 771.5,790.4 781.5,792.4 791.5,768.1 801.5,744.3 811.5,740.3 821.5,756.4 831.5,763.5 841.5,748.9 851.5,732.4 861.5,730.4 871.5,745.9 881.5,761.5 891.5,760.5 901.5,747.5 911.5,739.4 921.5,744.9 931.5,757.6 941.5,753.4 951.5,735.8 961.5,711.6 971.5,698.4 981.5,691.8 991.5,688.3 1001.5,685.5 1011.5,687.3 1021.5,695.4 1031.5,717.6 1041.5,748.9 1051.5,774.2 1061.5,776.2 1071.5,760.0 1081.5,748.3 1091.5,750.4 1101.5,759.6 1111.5,765.1 1121.5,769.7 1131.5,781.9 1141.5,785.9 1151.5,787.3 1161.5,770.2 1171.5,759.6 1181.5,745.3 1191.5,732.8 1201.5,708.5 1211.5,696.0 1221.5,694.4 1231.5,704.5 1241.5,714.2 1251.5,716.2 1261.5,717.4 1271.5,719.6 1281.5,740.9 1291.5,767.1 1301.5,791.4 1311.5,786.3 1321.5,765.1 1331.5,741.5 1341.5,731.8 1351.5,727.3 1361.5,718.0 1371.5,701.5 1381.5,684.3 1391.5,677.2 1401.5,678.6 1411.5,681.3 1421.5,679.6 1431.5,676.2 1441.5,677.2 1451.5,684.3 1461.5,705.5 1471.5,739.8 1481.5,770.2 1491.5,797.4" fill="none" stroke="#1e90ff" stroke-width="1" stroke-linejoin="round" shape-rendering="geometricPrecision"/>
<polyline points="21.5,756.4 31.5,779.2 41.5,802.0 51.5,759.0 61.5,731.8 71.5,699.4 81.5,708.5 91.5,696.4 101.5,676.2 111.5,674.0 121.5,681.3 131.5,692.4 141.5,704.5 151.5,707.5 161.5,714.6 171.5,717.6 181.5,724.7 191.5,754.0 201.5,788.3 211.5,820.3 221.5,815.6 231.5,799.4 241.5,792.4 251.5,767.0 261.5,745.9 271.5,705.9 281.5,694.4 291.5,679.6 301.5,674.6 311.5,685.3 321.5,687.3 331.5,715.6 341.5,728.7 351.5,744.9 361.5,724.7 371.5,697.4 381.5,692.4 391.5,708.5 401.5,741.9 411.5,754.0 421.5,755.0 431.5,740.9 441.5,730.4 451.5,725.3 461.5,729.3 471.5,750.0 481.5,780.3 491.5,810.6 501.5,814.6 511.5,806.0 521.5,779.6 531.5,782.7 541.5,792.4 551.5,822.3 561.5,822.3 571.5,810.6 581.5,804.5 591.5,790.4 601.5,793.4 611.5,788.3 621.5,793.4 631.5,783.3 641.5,754.0 651.5,712.6 661.5,706.5 671.5,720.7 681.5,743.9 691.5,761.1 701.5,765.5 711.5,763.7 721.5,745.9 731.5,736.4 741.5,746.9 751.5,764.6 761.5,804.0 771.5,800.0 781.5,772.2 791.5,730.4 801.5,730.4 811.5,759.0 821.5,777.2 831.5,753.0 841.5,721.3 851.5,723.7 861.5,744.9 871.5,768.1 881.5,768.5 891.5,743.9 901.5,729.7 911.5,743.9 921.5,762.1 931.5,765.1 941.5,730.8 951.5,707.9 961.5,694.4 971.5,693.0 981.5,685.3 991.5,687.3 1001.5,681.3 1011.5,691.0 1021.5,710.6 1031.5,745.9 1041.5,786.3 1051.5,785.3 1061.5,759.0 1071.5,738.4 1081.5,750.0 1091.5,762.5 1101.5,766.1 1111.5,768.5 1121.5,775.2 1131.5,799.4 1141.5,784.3 1151.5,779.2 1161.5,747.5 1171.5,755.0 1181.5,734.8 1191.5,710.6 1201.5,683.7 1211.5,694.0 1221.5,704.5 1231.5,714.2 1241.5,723.3 1251.5,712.6 1261.5,717.0 1271.5,728.7 1281.5,775.2 1291.5,799.4 1301.5,798.4 1311.5,762.1 1321.5,736.8 1331.5,725.7 1341.5,732.4 1351.5,724.7 1361.5,700.5 1371.5,680.9 1381.5,672.8 1391.5,680.3 1401.5,684.3 1411.5,679.6 1421.5,676.2 1431.5,674.6 1441.5,680.3 1451.5,699.4 1461.5,730.8 1471.5,782.3 1481.5,800.0 1491.5,809.5" fill="none" stroke="#dc143c" stroke-width="1" stroke-linejoin="round" shape-rendering="geometricPrecision"/>
<line x1="1508.5" y1="60" x2="1508.5" y2="832" stroke="#000"/>
<line x1="8" y1="657.5" x2="1562" y2="657.5" stroke="#000"/>
<line x1="8" y1="832.5" x2="1509" y2="832.5" stroke="#000"/>
<line x1="1508" y1="626.5" x2="1515" y2="626.5" stroke="#000"/>
<text x="1516.5" y="631" class="ax">1,2895</text>
<line x1="1508" y1="594.5" x2="1515" y2="594.5" stroke="#000"/>
<text x="1516.5" y="599" class="ax">1,2900</text>
<line x1="1508" y1="561.5" x2="1515" y2="561.5" stroke="#000"/>
<text x="1516.5" y="566" class="ax">1,2905</text>
<line x1="1508" y1="529.5" x2="1515" y2="529.5" stroke="#000"/>
<text x="1516.5" y="534" class="ax">1,2910</text>
<line x1="1508" y1="497.5" x2="1515" y2="497.5" stroke="#000"/>
<text x="1516.5" y="502" class="ax">1,2915</text>
<line x1="1508" y1="465.5" x2="1515" y2="465.5" stroke="#000"/>
<text x="1516.5" y="470" class="ax">1,2920</text>
<line x1="1508" y1="433.5" x2="1515" y2="433.5" stroke="#000"/>
<text x="1516.5" y="438" class="ax">1,2925</text>
<line x1="1508" y1="401.5" x2="1515" y2="401.5" stroke="#000"/>
<text x="1516.5" y="406" class="ax">1,2930</text>
<line x1="1508" y1="368.5" x2="1515" y2="368.5" stroke="#000"/>
<text x="1516.5" y="373" class="ax">1,2935</text>
<line x1="1508" y1="336.5" x2="1515" y2="336.5" stroke="#000"/>
<text x="1516.5" y="341" class="ax">1,2940</text>
<line x1="1508" y1="304.5" x2="1515" y2="304.5" stroke="#000"/>
<line x1="1508" y1="272.5" x2="1515" y2="272.5" stroke="#000"/>
<text x="1516.5" y="277" class="ax">1,2950</text>
<line x1="1508" y1="240.5" x2="1515" y2="240.5" stroke="#000"/>
<text x="1516.5" y="245" class="ax">1,2955</text>
<line x1="1508" y1="207.5" x2="1515" y2="207.5" stroke="#000"/>
<text x="1516.5" y="212" class="ax">1,2960</text>
<line x1="1508" y1="175.5" x2="1515" y2="175.5" stroke="#000"/>
<text x="1516.5" y="180" class="ax">1,2965</text>
<line x1="1508" y1="143.5" x2="1515" y2="143.5" stroke="#000"/>
<text x="1516.5" y="148" class="ax">1,2970</text>
<line x1="1508" y1="111.5" x2="1515" y2="111.5" stroke="#000"/>
<text x="1516.5" y="116" class="ax">1,2975</text>
<line x1="1508" y1="79.5" x2="1515" y2="79.5" stroke="#000"/>
<text x="1516.5" y="84" class="ax">1,2980</text>
<line x1="1508" y1="672.5" x2="1515" y2="672.5" stroke="#000"/>
<text x="1516" y="677" class="ax">40</text>
<line x1="1508" y1="708.5" x2="1515" y2="708.5" stroke="#000"/>
<text x="1516" y="713" class="ax">20</text>
<line x1="1508" y1="744.5" x2="1515" y2="744.5" stroke="#000"/>
<line x1="1508" y1="780.5" x2="1515" y2="780.5" stroke="#000"/>
<text x="1516" y="785" class="ax">-20</text>
<line x1="1508" y1="815.5" x2="1515" y2="815.5" stroke="#000"/>
<text x="1516" y="820" class="ax">-40</text>
<line x1="61.5" y1="832" x2="61.5" y2="839" stroke="#000"/>
<text x="61" y="849" class="ax" text-anchor="middle">11:00</text>
<line x1="141.5" y1="832" x2="141.5" y2="839" stroke="#000"/>
<text x="141" y="849" class="ax" text-anchor="middle">13:00</text>
<line x1="221.5" y1="832" x2="221.5" y2="839" stroke="#000"/>
<text x="221" y="849" class="ax" text-anchor="middle">15:00</text>
<line x1="301.5" y1="832" x2="301.5" y2="839" stroke="#000"/>
<text x="301" y="849" class="ax" text-anchor="middle">17:00</text>
<line x1="381.5" y1="832" x2="381.5" y2="839" stroke="#000"/>
<text x="381" y="849" class="ax" text-anchor="middle">19:00</text>
<line x1="461.5" y1="832" x2="461.5" y2="839" stroke="#000"/>
<text x="461" y="849" class="ax" text-anchor="middle">21:00</text>
<line x1="541.5" y1="832" x2="541.5" y2="839" stroke="#000"/>
<text x="541" y="849" class="ax" text-anchor="middle">23:00</text>
<line x1="621.5" y1="832" x2="621.5" y2="839" stroke="#000"/>
<text x="621" y="849" class="ax" text-anchor="middle">9/12</text>
<line x1="701.5" y1="832" x2="701.5" y2="839" stroke="#000"/>
<text x="701" y="849" class="ax" text-anchor="middle">03:00</text>
<line x1="781.5" y1="832" x2="781.5" y2="839" stroke="#000"/>
<text x="781" y="849" class="ax" text-anchor="middle">05:00</text>
<line x1="861.5" y1="832" x2="861.5" y2="839" stroke="#000"/>
<text x="861" y="849" class="ax" text-anchor="middle">07:00</text>
<line x1="941.5" y1="832" x2="941.5" y2="839" stroke="#000"/>
<text x="941" y="849" class="ax" text-anchor="middle">09:00</text>
<line x1="1021.5" y1="832" x2="1021.5" y2="839" stroke="#000"/>
<text x="1021" y="849" class="ax" text-anchor="middle">11:00</text>
<line x1="1101.5" y1="832" x2="1101.5" y2="839" stroke="#000"/>
<text x="1101" y="849" class="ax" text-anchor="middle">13:00</text>
<line x1="1181.5" y1="832" x2="1181.5" y2="839" stroke="#000"/>
<text x="1181" y="849" class="ax" text-anchor="middle">15:00</text>
<line x1="1261.5" y1="832" x2="1261.5" y2="839" stroke="#000"/>
<text x="1261" y="849" class="ax" text-anchor="middle">17:00</text>
<line x1="1341.5" y1="832" x2="1341.5" y2="839" stroke="#000"/>
<text x="1341" y="849" class="ax" text-anchor="middle">19:00</text>
<line x1="1421.5" y1="832" x2="1421.5" y2="839" stroke="#000"/>
<text x="1421" y="849" class="ax" text-anchor="middle">21:00</text>
<line x1="1501.5" y1="832" x2="1501.5" y2="839" stroke="#000"/>
<text x="1501" y="849" class="ax" text-anchor="middle">23:00</text>
<line x1="1498" y1="304.5" x2="1505" y2="304.5" stroke="#000"/>
<path d="M1508.5,304.5 L1515.5,297 L1552,297 L1552,311 L1515.5,311 Z" fill="#000" shape-rendering="geometricPrecision"/>
<text x="1517.8" y="308" class="ax" style="fill:#fff" textLength="32.3" lengthAdjust="spacingAndGlyphs">1,2945</text>
<path d="M1509.5,743.5 L1515.5,737.5 L1523.5,737.5 L1523.5,750.5 L1515.5,750.5 Z" fill="#ffff00" stroke="#000" shape-rendering="geometricPrecision"/>
<text x="1517.8" y="747.7" class="ax" textLength="4.4" lengthAdjust="spacingAndGlyphs">0</text>
<path d="M1509.5,796.5 L1515.5,790.5 L1542.5,790.5 L1542.5,802.5 L1515.5,802.5 Z" fill="#1e90ff" stroke="#000" shape-rendering="geometricPrecision"/>
<text x="1517" y="801" class="ax" style="fill:#fff" textLength="25" lengthAdjust="spacingAndGlyphs">-29,8</text>
<text x="1516" y="820" class="ax">-40</text>
<path d="M1509.5,808.5 L1515.5,802.5 L1548.5,802.5 L1548.5,814.5 L1515.5,814.5 Z" fill="#dc143c" stroke="#000" shape-rendering="geometricPrecision"/>
<text x="1517" y="813" class="ax" style="fill:#fff" textLength="30.8" lengthAdjust="spacingAndGlyphs">-36,36</text>
<text x="1346" y="596" class="wm" text-anchor="middle" textLength="252" lengthAdjust="spacing">WWW.TRADING-SOFTWARE-COLLECTION.COM</text>
<text x="1345" y="613" class="wm" text-anchor="middle" textLength="147" lengthAdjust="spacing">ANDREYBBRV@GMAIL.COM</text>
<text x="1342" y="631" class="wm" text-anchor="middle" textLength="118" lengthAdjust="spacing">SKYPE: ANDREYBBRV</text>
<text x="11" y="679" class="ax" textLength="215" lengthAdjust="spacingAndGlyphs">TAS_Ratio($EURUSD (15 Min),3,3,10,1.8h)</text>
<text x="11" y="830" class="ax" textLength="124" lengthAdjust="spacingAndGlyphs">© 2014 NinjaTrader, LLC</text>
</svg>
</body></html>
